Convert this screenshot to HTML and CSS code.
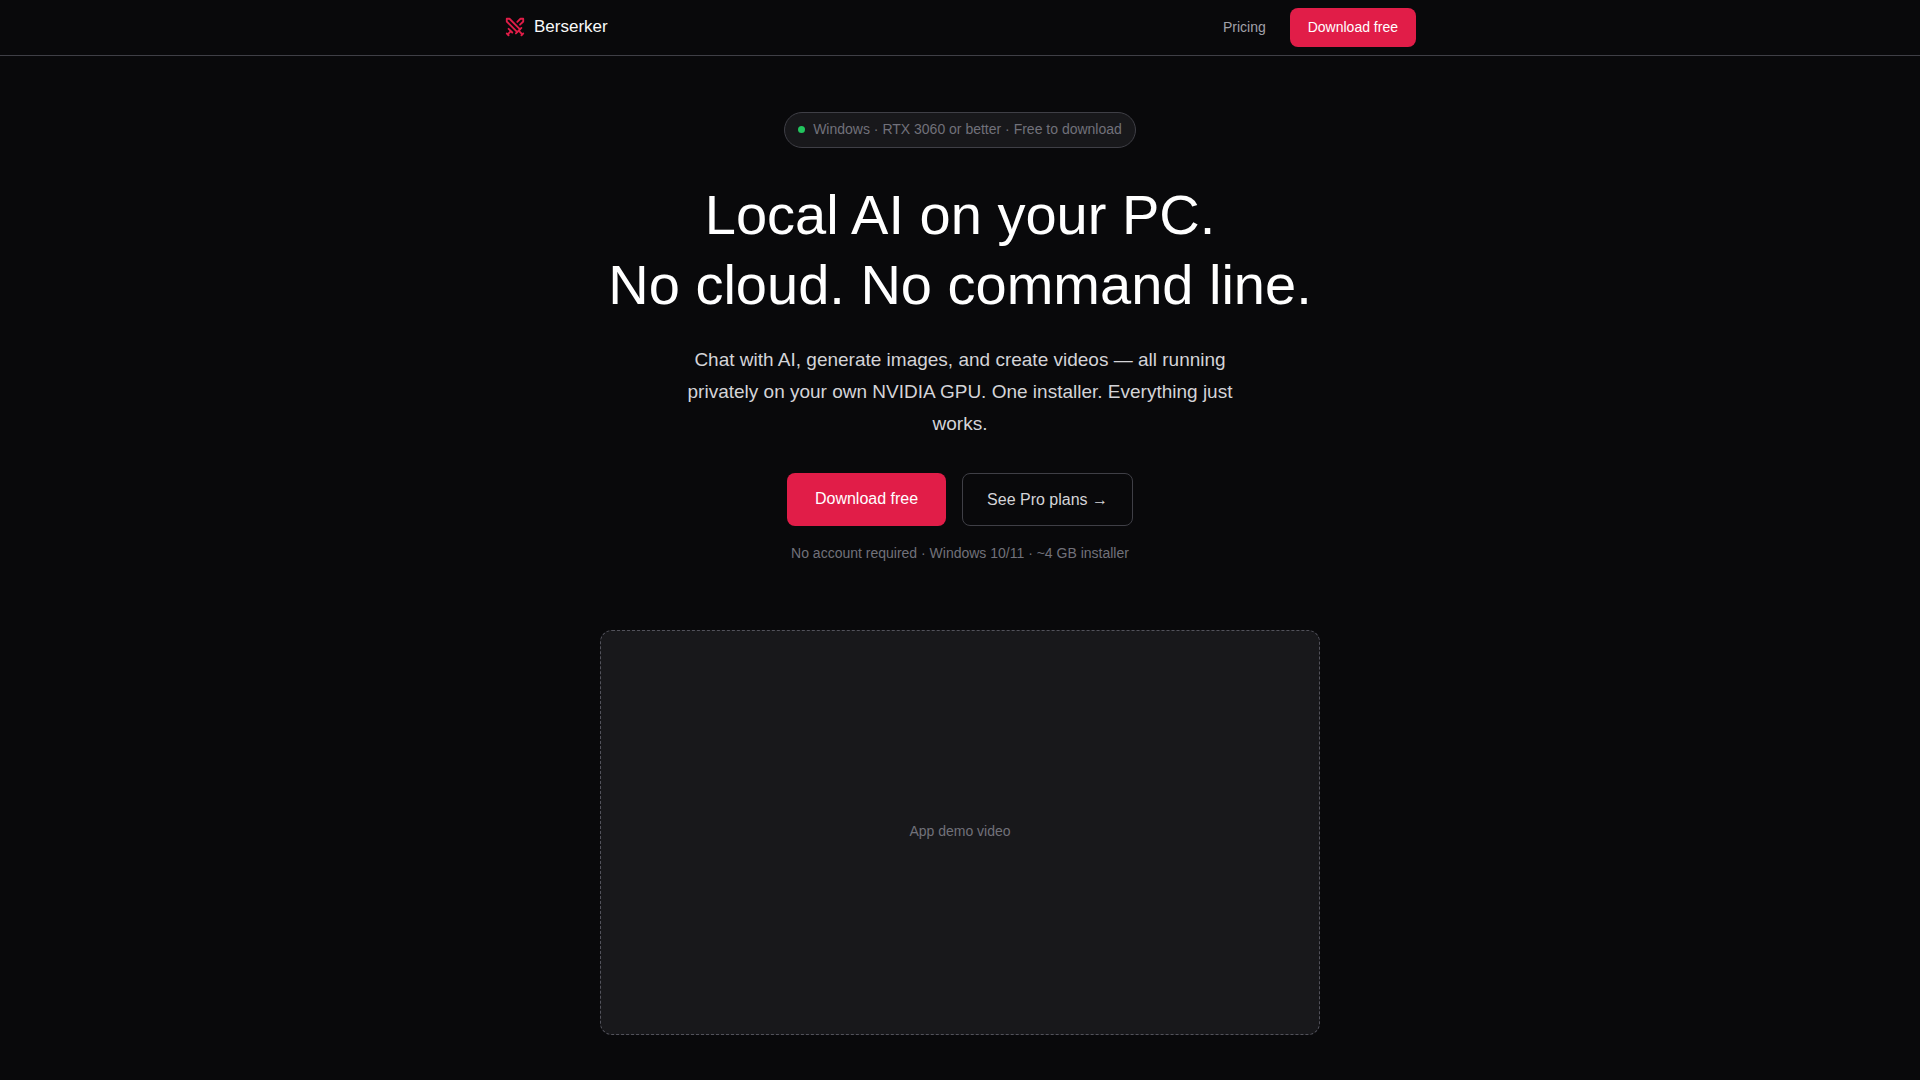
FILE: index.html
```
<!DOCTYPE html>
<html lang="en">
<head>
  <meta charset="UTF-8" />
  <meta name="viewport" content="width=device-width, initial-scale=1.0" />
  <title>Berserker</title>
  <link rel="stylesheet" href="styles.css">
</head>
<body>
  <header class="nav">
    <div class="nav-inner">
      <a class="logo" href="#">
        <svg class="logo-icon" viewBox="0 0 24 24" fill="none" stroke="currentColor" stroke-width="2" stroke-linecap="round" stroke-linejoin="round" aria-hidden="true">
          <polyline points="14.5 17.5 3 6 3 3 6 3 17.5 14.5" />
          <line x1="13" y1="19" x2="19" y2="13" />
          <line x1="16" y1="16" x2="20" y2="20" />
          <line x1="19" y1="21" x2="21" y2="19" />
          <polyline points="14.5 6.5 18 3 21 3 21 6 17.5 9.5" />
          <line x1="5" y1="14" x2="9" y2="18" />
          <line x1="7" y1="17" x2="4" y2="20" />
          <line x1="3" y1="19" x2="5" y2="21" />
        </svg>
        Berserker
      </a>
      <nav class="nav-links">
        <a class="nav-link" href="#pricing">Pricing</a>
        <a class="btn btn-primary btn-small" href="#download">Download free</a>
      </nav>
    </div>
  </header>

  <main class="hero">
    <div class="badge"><span class="dot"></span>Windows · RTX 3060 or better · Free to download</div>
    <h1>Local AI on your PC.<br>No cloud. No command line.</h1>
    <p class="subtitle">Chat with AI, generate images, and create videos — all running privately on your own NVIDIA GPU. One installer. Everything just works.</p>
    <div class="actions">
      <a class="btn btn-primary" href="#download">Download free</a>
      <a class="btn btn-outline" href="#pricing">See Pro plans →</a>
    </div>
    <p class="note">No account required · Windows 10/11 · ~4 GB installer</p>
    <div class="demo">App demo video</div>
  </main>
</body>
</html>
```
FILE: styles.css
```
* {
  box-sizing: border-box;
  margin: 0;
  padding: 0;
}
body {
  font-family: "Liberation Sans", Arial, sans-serif;
  font-size: 16px;
  line-height: 25px;
  background: #09090b;
  color: #fafafa;
}
a {
  color: inherit;
  text-decoration: none;
}

/* nav */
.nav {
  border-bottom: 1px solid #3f3f46;
}
.nav-inner {
  max-width: 960px;
  margin: 0 auto;
  padding: 8px 24px;
  display: flex;
  align-items: center;
  justify-content: space-between;
}
.logo {
  display: flex;
  align-items: center;
  gap: 8px;
  padding-bottom: 1px;
  font-size: 17px;
  line-height: 26px;
}
.logo-icon {
  width: 22px;
  height: 22px;
  color: #e11d48;
}
.nav-links {
  display: flex;
  align-items: center;
  gap: 24px;
  font-size: 14px;
}
.nav-link {
  color: #a1a1aa;
}

/* buttons */
.btn {
  padding: 13px 28px;
  border-radius: 8px;
}
.btn-primary {
  background: #e11d48;
  color: #fff;
}
.btn-outline {
  padding: 13px 24px;
  border: 1px solid #3f3f46;
  color: #d4d4d8;
}
.btn-small {
  padding: 8px 18px;
  line-height: 23px;
}

/* hero */
.hero {
  max-width: 768px;
  margin: 0 auto;
  padding: 56px 24px 80px;
  display: flex;
  flex-direction: column;
  align-items: center;
  text-align: center;
}
.badge {
  display: flex;
  align-items: center;
  gap: 8px;
  padding: 6px 13px 8px;
  border: 1px solid #3f3f46;
  border-radius: 18px;
  background: #18181b;
  color: #71717a;
  font-size: 14px;
  line-height: 20px;
}
.dot {
  width: 7px;
  height: 7px;
  border-radius: 50%;
  background: #22c55e;
}
h1 {
  margin-top: 32px;
  font-size: 56px;
  font-weight: 400;
  line-height: 70px;
  color: #fff;
}
.subtitle {
  max-width: 560px;
  margin-top: 24px;
  font-size: 19px;
  line-height: 32px;
  color: #d4d4d8;
}
.actions {
  display: flex;
  gap: 16px;
  margin-top: 33px;
}
.note {
  margin-top: 16px;
  font-size: 14px;
  line-height: 22px;
  color: #71717a;
}
.demo {
  width: 100%;
  margin-top: 66px;
  aspect-ratio: 16 / 9;
  display: flex;
  align-items: center;
  justify-content: center;
  padding-bottom: 2px;
  border: 1px dashed #52525b;
  border-radius: 12px;
  background: #18181b;
  color: #71717a;
  font-size: 14px;
}
```
